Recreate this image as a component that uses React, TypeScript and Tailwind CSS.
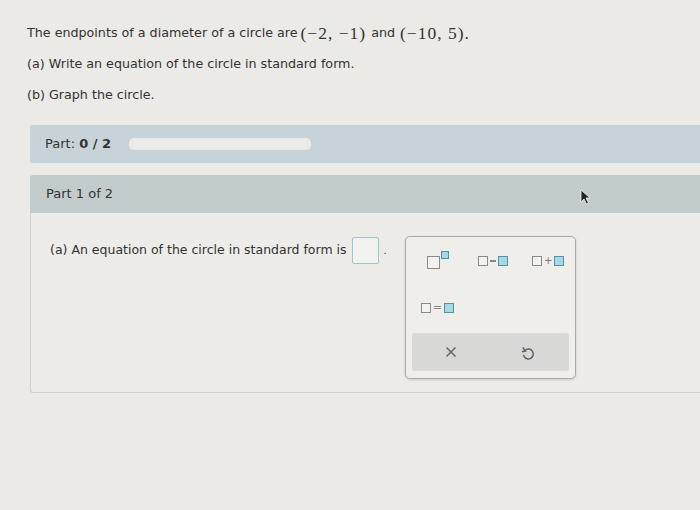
import React from 'react';

function Box({ teal = false, size = 'w-[9px] h-[9px]' }: { teal?: boolean; size?: string }) {
  return (
    <span
      className={`inline-block ${size} border ${
        teal ? 'border-[#4f95a6] bg-[#a7d8e3]' : 'border-[#8a8a8a] bg-[#f2f2f0]'
      }`}
    />
  );
}

function Cursor() {
  return (
    <svg width="12" height="16" viewBox="0 0 12 16" className="absolute left-[550px] top-[14px]">
      <path d="M1 1 L1 13 L4 10 L6.5 15 L8.5 14 L6 9 L10 9 Z" fill="#222" stroke="#f5f5f5" strokeWidth="0.8" />
    </svg>
  );
}

export default function App() {
  return (
    <div className="w-[700px] h-[510px] overflow-hidden bg-[#ebeae6] text-[#333] font-['DejaVu_Sans',Verdana,sans-serif]">
      {/* Question */}
      <div className="pl-[27px] pt-[22px] text-[12.7px]">
        <p className="flex items-center h-[22px]">
          <span>The endpoints of a diameter of a circle are</span>
          <span className="ml-[3px] font-['Liberation_Serif',serif] text-[17.5px] tracking-[1px]">(−2, −1)</span>
          <span className="ml-[5px]">and</span>
          <span className="ml-[5px] font-['Liberation_Serif',serif] text-[17.5px] tracking-[1px]">(−10, 5).</span>
        </p>
        <p className="mt-[9px] h-[22px] flex items-center">(a) Write an equation of the circle in standard form.</p>
        <p className="mt-[9px] h-[22px] flex items-center">(b) Graph the circle.</p>
      </div>

      {/* Part progress */}
      <div className="ml-[30px] mt-[19px] h-[38px] bg-[#c8d3d9] rounded-l-[3px] flex items-center pl-[15px] text-[13px]">
        <span>
          Part: <span className="font-bold">0 / 2</span>
        </span>
        <div className="ml-[18px] w-[182px] h-[12px] rounded-[5px] bg-[#ebecea]" />
      </div>

      {/* Part 1 */}
      <div className="ml-[30px] mt-[12px] relative">
        <div className="h-[38px] bg-[#c3cccc] rounded-tl-[3px] flex items-center pl-[16px] text-[13px]">
          Part 1 of 2
        </div>
        <Cursor />
        <div className="h-[180px] border-l border-b border-[#cfcfcb] rounded-bl-[3px] bg-[#edece9] flex items-start pl-[19px] pt-[23px]">
          <div className="flex items-center h-[28px] text-[12.5px]">
            <span>(a) An equation of the circle in standard form is</span>
            <span className="ml-[5px] w-[27px] h-[27px] border border-[#9cc7cf] rounded-[2px] bg-[#f2f2f0]" />
            <span className="ml-[5px] text-[10px]">.</span>
          </div>

          {/* Palette popover */}
          <div className="ml-[18px] w-[171px] h-[143px] border border-[#a9a9a7] rounded-[5px] bg-[#efeeeb] shadow-[0_1px_3px_rgba(0,0,0,0.15)] flex flex-col px-[6px] pb-[7px]">
            <div className="grid grid-cols-3 h-[32px] items-end">
              <div className="flex items-start justify-center">
                <Box size="w-[13px] h-[13px] mt-[5px]" />
                <Box teal size="w-[8px] h-[8px] ml-[1px]" />
              </div>
              <div className="flex items-center justify-center gap-[2px] pb-[3px] pl-[5px]">
                <Box size="w-[10px] h-[10px]" />
                <span className="w-[6px] h-[1.5px] bg-[#888]" />
                <Box teal size="w-[10px] h-[10px]" />
              </div>
              <div className="flex items-center justify-center gap-[2px] pb-[3px] pl-[11px]">
                <Box size="w-[10px] h-[10px]" />
                <span className="text-[10px] leading-none text-[#777]">+</span>
                <Box teal size="w-[10px] h-[10px]" />
              </div>
            </div>
            <div className="h-[64px] flex items-start pt-[33px] pl-[9px]">
              <div className="flex items-center gap-[2px]">
                <Box size="w-[10px] h-[10px]" />
                <span className="text-[11px] leading-none text-[#888]">=</span>
                <Box teal size="w-[10px] h-[10px]" />
              </div>
            </div>
            <div className="flex-1 bg-[#d8d9d7] rounded-[3px] grid grid-cols-2 items-center">
              <div className="flex justify-center">
                <svg width="12" height="12" viewBox="0 0 12 12">
                  <path d="M1.5 1.5 L10.5 10.5 M10.5 1.5 L1.5 10.5" stroke="#5a6066" strokeWidth="1.4" />
                </svg>
              </div>
              <div className="flex justify-center pt-[3px] pr-[4px]">
                <svg width="14" height="15" viewBox="0 0 13 14">
                  <path
                    d="M3.6 4.2 A4.6 4.6 0 1 1 2.3 8.2"
                    fill="none"
                    stroke="#5a6066"
                    strokeWidth="1.4"
                  />
                  <path d="M1.6 1.4 L4.2 4.6 L0.8 5.4" fill="none" stroke="#5a6066" strokeWidth="1.4" />
                </svg>
              </div>
            </div>
          </div>
        </div>
      </div>
    </div>
  );
}
